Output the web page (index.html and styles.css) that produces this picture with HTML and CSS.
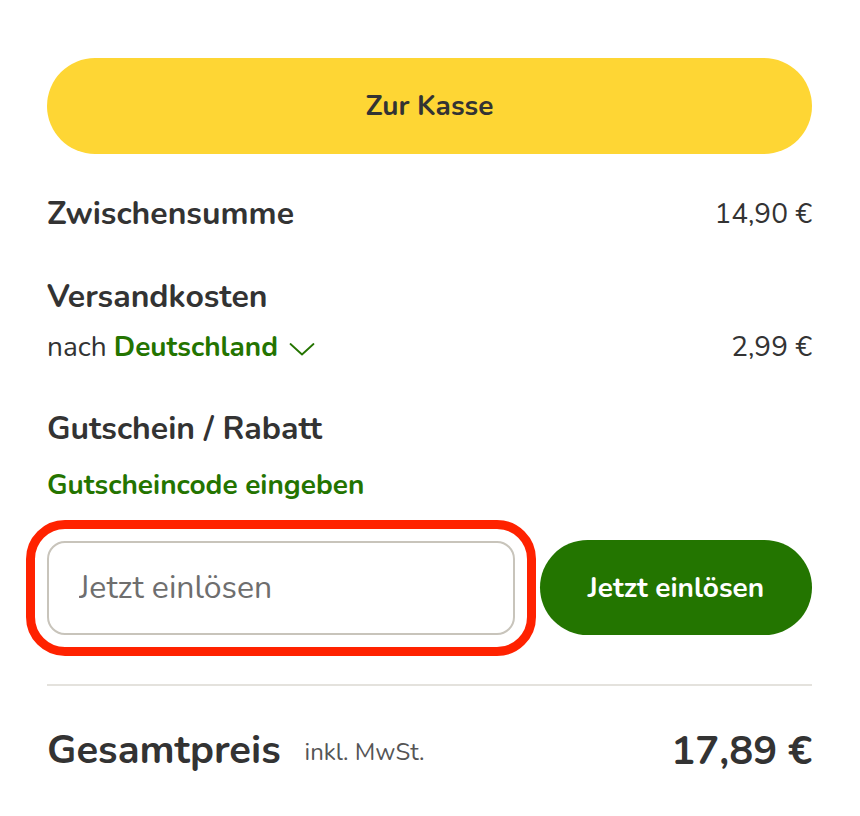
FILE: index.html
```html
<!DOCTYPE html>
<html lang="de">
<head>
    <meta charset="UTF-8">
    <meta name="viewport" content="width=device-width, initial-scale=1.0">
    <title>Warenkorb</title>
    <link rel="stylesheet" href="styles.css">
</head>
<body>
    <div class="summary">
        <button type="button" class="checkout-btn">Zur Kasse</button>

        <div class="row subtotal">
            <span class="label">Zwischensumme</span>
            <span class="amount">14,90 €</span>
        </div>

        <div class="shipping">
            <div class="label">Versandkosten</div>
            <div class="row shipping-line">
                <span class="country">nach <a href="#" class="country-link">Deutschland</a>
                    <svg class="chevron" width="26" height="14" viewBox="0 0 26 14" fill="none">
                        <path d="M1.5 2 L13 12.5 L24.5 2" stroke="#247400" stroke-width="1.8" stroke-linecap="round" stroke-linejoin="round"/>
                    </svg>
                </span>
                <span class="amount">2,99 €</span>
            </div>
        </div>

        <div class="voucher">
            <div class="label">Gutschein / Rabatt</div>
            <a href="#" class="voucher-link">Gutscheincode eingeben</a>
            <form class="voucher-form">
                <input type="text" class="voucher-input" placeholder="Jetzt einlösen">
                <button type="button" class="redeem-btn">Jetzt einlösen</button>
            </form>
        </div>

        <div class="row total">
            <span class="total-label">Gesamtpreis <small>inkl. MwSt.</small></span>
            <span class="total-amount">17,89 €</span>
        </div>
    </div>
</body>
</html>
```

FILE: styles.css
```css
body {
    margin: 0;
    font-family: "Nunito", "Open Sans", "Noto Sans", sans-serif;
    color: #333;
    background-color: #fff;
}

.summary {
    padding: 58px 48px 0 47px;
}

.row {
    display: flex;
    justify-content: space-between;
    align-items: center;
}

.checkout-btn {
    display: block;
    width: 100%;
    height: 96px;
    border: none;
    border-radius: 48px;
    background-color: #fed634;
    color: #333;
    font-family: inherit;
    font-size: 28px;
    font-weight: 700;
    cursor: pointer;
}

.label {
    font-size: 32px;
    font-weight: 700;
    line-height: 40px;
}

.amount {
    font-size: 28px;
    line-height: 40px;
}

.subtotal {
    margin-top: 40px;
}

.shipping {
    margin-top: 43px;
}

.shipping-line {
    margin-top: 10px;
}

.country {
    font-size: 28px;
    line-height: 40px;
}

.country-link,
.voucher-link {
    color: #247400;
    font-weight: 700;
    text-decoration: none;
}

.chevron {
    margin-left: 4px;
    vertical-align: middle;
}

.voucher {
    margin-top: 42px;
}

.voucher-link {
    display: block;
    width: max-content;
    margin-top: 18px;
    font-size: 28px;
    line-height: 36px;
}

.voucher-form {
    display: flex;
    align-items: center;
    gap: 25px;
    margin-top: 37px;
}

.voucher-input {
    flex: 1;
    min-width: 0;
    height: 94px;
    box-sizing: border-box;
    padding: 0 30px;
    border: 2px solid #c8c4bb;
    border-radius: 18px;
    font-family: inherit;
    font-size: 32px;
    color: #333;
    /* Markierung um das Eingabefeld */
    outline: 9px solid #ff2200;
    outline-offset: 12px;
}

.voucher-input::placeholder {
    color: #6e6e6e;
}

.redeem-btn {
    width: 272px;
    height: 95px;
    border: none;
    border-radius: 48px;
    background-color: #237500;
    color: #fff;
    font-family: inherit;
    font-size: 28px;
    font-weight: 700;
    cursor: pointer;
}

.total {
    margin-top: 49px;
    padding-top: 40px;
    border-top: 2px solid #e4e2dd;
}

.total-label {
    font-size: 40px;
    font-weight: 700;
    line-height: 48px;
}

.total-label small {
    margin-left: 13px;
    font-size: 24px;
    font-weight: 400;
    color: #555;
    vertical-align: 3px;
}

.total-amount {
    font-size: 40px;
    font-weight: 700;
    line-height: 48px;
}
```
